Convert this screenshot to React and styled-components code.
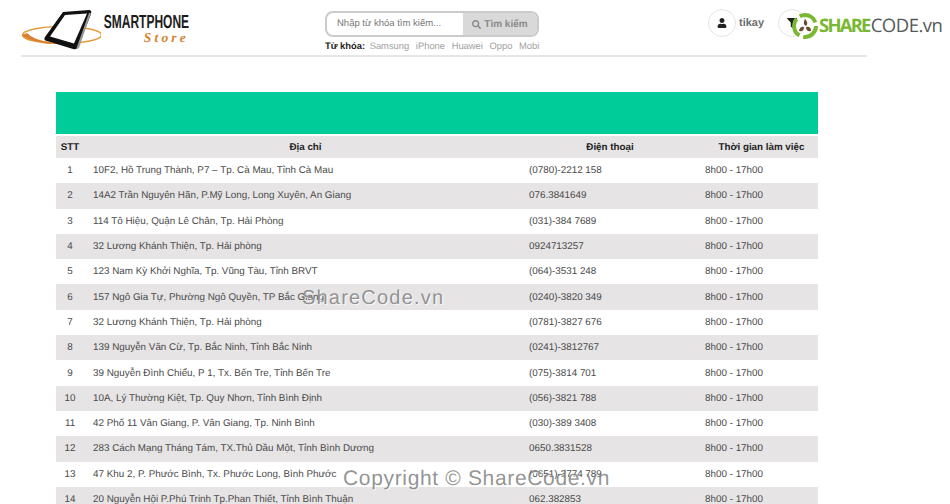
import React from "react";
import styled, { createGlobalStyle } from "styled-components";
import { FaUser, FaSearch, FaFilter } from "react-icons/fa";

const GlobalStyle = createGlobalStyle`
  html, body {
    margin: 0;
    height: 504px;
    overflow: hidden;
    background: #fff;
    font-family: "Liberation Sans", Arial, sans-serif;
    text-rendering: geometricPrecision;
  }
`;

const Page = styled.div`
  position: relative;
  width: 950px;
  height: 504px;
  overflow: hidden;
`;

const Header = styled.header`
  display: flex;
  align-items: flex-start;
  width: 846px;
  height: 55px;
  margin-left: 21px;
  border-bottom: 2px solid #e6e6e6;
`;

const Logo = styled.div`
  display: flex;
  width: 304px;
  height: 55px;
`;

const Brand = styled.div`
  display: flex;
  flex-direction: column;
  align-items: flex-end;
  width: 86px;
  margin-left: 2px;
  padding-top: 13px;
`;

const BrandName = styled.span`
  display: block;
  font-size: 19px;
  line-height: 20px;
  font-weight: 700;
  color: #1c1c1c;
  white-space: nowrap;
  transform: scaleX(0.632);
  transform-origin: right center;
`;

const BrandSub = styled.span`
  margin-top: -1px;
  font-family: "Liberation Serif", serif;
  font-style: italic;
  font-weight: 700;
  font-size: 13.5px;
  line-height: 12px;
  letter-spacing: 3.2px;
  color: #d9812f;
`;

const SearchArea = styled.div`
  width: 214px;
  padding-top: 11px;
`;

const SearchBox = styled.div`
  display: flex;
  height: 26px;
  box-sizing: border-box;
  border: 2px solid #cbcbcb;
  border-radius: 8px;
  overflow: hidden;
`;

const SearchInput = styled.div`
  flex: 1;
  padding-left: 10px;
  font-size: 9.5px;
  line-height: 22px;
  color: #777;
`;

const SearchButton = styled.div`
  display: flex;
  align-items: center;
  justify-content: center;
  gap: 3px;
  width: 74px;
  background: #d9d9d9;
  font-size: 10px;
  font-weight: 700;
  color: #8a8a8a;
`;

const Keywords = styled.div`
  display: flex;
  margin-top: 3px;
  font-size: 9.4px;
  line-height: 12px;
  color: #a0a0a0;
  white-space: nowrap;
`;

const KeywordLabel = styled.b`
  margin-right: 4.5px;
  color: #222;
`;

const Keyword = styled.span`
  margin-right: 6.6px;
`;

const Account = styled.div`
  display: flex;
  align-items: center;
  margin-left: 169px;
  padding-top: 9px;
`;

const IconCircle = styled.div`
  display: flex;
  align-items: center;
  justify-content: center;
  width: 26px;
  height: 26px;
  border: 1px solid #e4e4e4;
  border-radius: 50%;
  color: #222;
  font-size: 10px;
`;

const UserName = styled.span`
  width: 39px;
  margin-left: 3px;
  font-size: 11px;
  font-weight: 700;
  color: #6b6f6f;
`;

const Content = styled.main`
  width: 762px;
  margin: 35px 0 0 56px;
`;

const Banner = styled.div`
  height: 42px;
  background: #00cc99;
`;

const Table = styled.table`
  width: 762px;
  margin-top: 2px;
  border-collapse: collapse;
  table-layout: fixed;
  font-size: 9.85px;
`;

const HeadCell = styled.th`
  box-sizing: border-box;
  width: ${(p) => p.$width}px;
  height: 22px;
  padding: 0 0 0 ${(p) => p.$shift || 0}px;
  background: #e6e4e5;
  font-size: 9.8px;
  font-weight: 700;
  text-align: center;
  color: #222;
`;

const Row = styled.tr`
  height: 25.3px;
  background: ${(p) => (p.$alt ? "#e6e4e5" : "#fff")};
`;

const Cell = styled.td`
  padding: 0 0 0 9px;
  color: #4a4a4a;
  white-space: nowrap;
`;

const IndexCell = styled.td`
  padding: 0;
  text-align: center;
  color: #4a4a4a;
`;

const ShareLogo = styled.div`
  position: absolute;
  top: 12px;
  left: 791px;
  display: flex;
  align-items: center;
  font-family: "Open Sans", sans-serif;
  font-size: 18.5px;
  line-height: 28px;
  letter-spacing: -0.5px;
  color: #55595a;
`;

const ShareGreen = styled.span`
  font-weight: 700;
  letter-spacing: -1.8px;
  margin-right: 1px;
  color: #7ab833;
`;

const Watermark = styled.div`
  position: absolute;
  top: ${(p) => p.$top}px;
  left: ${(p) => p.$left}px;
  font-size: ${(p) => p.$size}px;
  line-height: 24px;
  letter-spacing: ${(p) => p.$spacing}px;
  white-space: nowrap;
  color: rgba(120, 120, 120, 0.8);
  text-shadow: 1px 1px 1px rgba(255, 255, 255, 0.9);
`;

const rows = [
  ["10F2, Hồ Trung Thành, P7 – Tp. Cà Mau, Tỉnh Cà Mau", "(0780)-2212 158"],
  ["14A2 Trần Nguyên Hãn, P.Mỹ Long, Long Xuyên, An Giang", "076.3841649"],
  ["114 Tô Hiệu, Quận Lê Chân, Tp. Hải Phòng", "(031)-384 7689"],
  ["32 Lương Khánh Thiện, Tp. Hải phòng", "0924713257"],
  ["123 Nam Kỳ Khởi Nghĩa, Tp. Vũng Tàu, Tỉnh BRVT", "(064)-3531 248"],
  ["157 Ngô Gia Tự, Phường Ngô Quyền, TP Bắc Giang", "(0240)-3820 349"],
  ["32 Lương Khánh Thiện, Tp. Hải phòng", "(0781)-3827 676"],
  ["139 Nguyễn Văn Cừ, Tp. Bắc Ninh, Tỉnh Bắc Ninh", "(0241)-3812767"],
  ["39 Nguyễn Đình Chiểu, P 1, Tx. Bến Tre, Tỉnh Bến Tre", "(075)-3814 701"],
  ["10A, Lý Thường Kiệt, Tp. Quy Nhơn, Tỉnh Bình Định", "(056)-3821 788"],
  ["42 Phố 11 Vân Giang, P. Vân Giang, Tp. Ninh Bình", "(030)-389 3408"],
  ["283 Cách Mạng Tháng Tám, TX.Thủ Dầu Một, Tỉnh Bình Dương", "0650.3831528"],
  ["47 Khu 2, P. Phước Bình, Tx. Phước Long, Bình Phước", "(0651)-3774 789"],
  ["20 Nguyễn Hội P.Phú Trinh Tp.Phan Thiết, Tỉnh Bình Thuận", "062.382853"],
];

const keywords = ["Samsung", "iPhone", "Huawei", "Oppo", "Mobi"];

const PhoneMark = () => (
  <svg width="80" height="55" viewBox="0 0 80 55">
    <ellipse cx="41" cy="35" rx="39.5" ry="8.5" fill="none" stroke="#e59a3c" strokeWidth="1.6" />
    <path d="M1 35 Q6 41 30 44 L30 42 Q12 40 6 33 Z" fill="#d9812f" />
    <path d="M42 12 L68 10 Q71 10 70 14 L57 47 Q56 50 52 49 L26 41 Q22 40 24 37 Z" fill="#111" />
    <path d="M70 13 L58 48 L55 49.5 L68 13 Z" fill="#999" />
    <path d="M44 15 L66 13.5 L53 43.5 L29 36.5 Z" fill="#fff" />
  </svg>
);

const RingMark = () => (
  <svg width="28" height="28" viewBox="0 0 28 28">
    <circle cx="14" cy="14" r="11" fill="none" stroke="#7ab833" strokeWidth="4" strokeDasharray="19 4" />
    <path d="M14 7 Q18 11 15 14 Q11 12 14 7 Z" fill="#6b4a2f" />
    <path d="M8 19 Q9 14 13 15 Q13 20 8 19 Z" fill="#6b4a2f" />
    <path d="M20 19 Q15 20 15 15 Q20 14 20 19 Z" fill="#6b4a2f" />
  </svg>
);

export default function App() {
  return (
    <Page>
      <GlobalStyle />
      <Header>
        <Logo>
          <PhoneMark />
          <Brand>
            <BrandName>SMARTPHONE</BrandName>
            <BrandSub>Store</BrandSub>
          </Brand>
        </Logo>
        <SearchArea>
          <SearchBox>
            <SearchInput>Nhập từ khóa tìm kiếm...</SearchInput>
            <SearchButton>
              <FaSearch size={9} />
              Tìm kiếm
            </SearchButton>
          </SearchBox>
          <Keywords>
            <KeywordLabel>Từ khóa:</KeywordLabel>
            {keywords.map((k) => (
              <Keyword key={k}>{k}</Keyword>
            ))}
          </Keywords>
        </SearchArea>
        <Account>
          <IconCircle>
            <FaUser />
          </IconCircle>
          <UserName>tikay</UserName>
          <IconCircle>
            <FaFilter />
          </IconCircle>
        </Account>
      </Header>
      <Content>
        <Banner />
        <Table>
          <thead>
            <tr>
              <HeadCell $width={28}>STT</HeadCell>
              <HeadCell $width={436} $shift={7}>Địa chỉ</HeadCell>
              <HeadCell $width={176} $shift={4}>Điện thoại</HeadCell>
              <HeadCell $width={122} $shift={9}>Thời gian làm việc</HeadCell>
            </tr>
          </thead>
          <tbody>
            {rows.map(([address, phone], i) => (
              <Row key={i} $alt={i % 2 === 1}>
                <IndexCell>{i + 1}</IndexCell>
                <Cell>{address}</Cell>
                <Cell>{phone}</Cell>
                <Cell>8h00 - 17h00</Cell>
              </Row>
            ))}
          </tbody>
        </Table>
      </Content>
      <ShareLogo>
        <RingMark />
        <ShareGreen>SHARE</ShareGreen>CODE.vn
      </ShareLogo>
      <Watermark $top={286} $left={302} $size={20} $spacing={1.2}>ShareCode.vn</Watermark>
      <Watermark $top={467} $left={343} $size={21} $spacing={0.66}>Copyright © ShareCode.vn</Watermark>
    </Page>
  );
}
